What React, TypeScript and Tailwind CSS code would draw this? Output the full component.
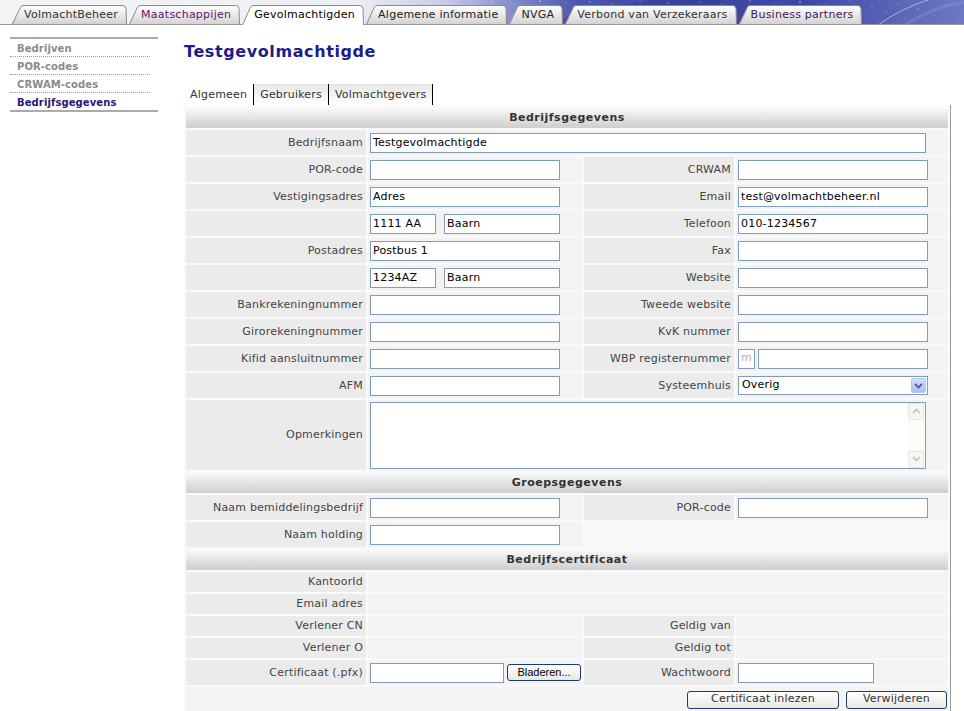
import React from "react";

const tabs: { label: string; text: string; active?: boolean }[] = [
  { label: "VolmachtBeheer", text: "text-[#333333]" },
  { label: "Maatschappijen", text: "text-[#5b1670]" },
  { label: "Gevolmachtigden", text: "text-black", active: true },
  { label: "Algemene informatie", text: "text-[#222222]" },
  { label: "NVGA", text: "text-[#222222]" },
  { label: "Verbond van Verzekeraars", text: "text-[#333333]" },
  { label: "Business partners", text: "text-[#3b1a4d]" },
];

const dots: [number, number, number, number][] = [
  [470, 3, 0.6, 0.5], [492, 2, 0.7, 0.6], [515, 4, 0.6, 0.6], [540, 1, 0.8, 0.7], [566, 3, 0.6, 0.5],
  [590, 2, 0.7, 0.6], [612, 4, 0.5, 0.5], [640, 1, 0.6, 0.6], [668, 3, 0.7, 0.5], [700, 2, 0.6, 0.6],
  [722, 4, 0.5, 0.5], [750, 1, 0.7, 0.6], [776, 3, 0.6, 0.5], [800, 2, 0.8, 0.7], [826, 4, 0.6, 0.5],
  [850, 1, 0.6, 0.6], [872, 6, 0.7, 0.6], [886, 12, 0.6, 0.5], [898, 4, 0.5, 0.6], [905, 18, 0.6, 0.4],
  [918, 9, 0.7, 0.5], [934, 15, 0.5, 0.4], [945, 5, 0.6, 0.5], [957, 20, 0.5, 0.4], [878, 20, 0.6, 0.4],
  [430, 2, 0.5, 0.35], [452, 4, 0.5, 0.4],
];

function TopTab({ label, text, active }: { label: string; text: string; active?: boolean }) {
  const h = active ? 20 : 19;
  const fill = active ? "#ffffff" : "url(#tabg)";
  return (
    <div className={`mr-[2px] flex shrink-0 ${active ? "relative z-10 -mb-px h-[20px]" : "h-[19px]"}`}>
      <svg width="11" height={h} className="block shrink-0">
        <path d={`M0,${h} L8,2.6 Q9,0.5 11,0.5 L11,${h} Z`} fill={fill} />
        <path d={`M0.5,${h} L8.3,2.6 Q9.2,0.5 11,0.5`} fill="none" stroke="#8a8a8a" />
      </svg>
      <div
        className={`flex h-full items-center whitespace-nowrap border-t border-[#8a8a8a] pl-[1px] pr-[3px] text-[11px] tracking-[0.25px] ${
          active ? "bg-white" : "bg-linear-to-b from-white to-[#d3d3d3]"
        } ${text}`}
      >
        {label}
      </div>
      <svg width="6" height={h} className="block shrink-0">
        <path d={`M0,0.5 L1.5,0.5 Q4.6,0.5 5,3.5 L5.6,${h} L0,${h} Z`} fill={fill} />
        <path d={`M0,0.5 L1.5,0.5 Q4.6,0.5 5,3.5 L5.5,${h}`} fill="none" stroke="#8a8a8a" />
      </svg>
    </div>
  );
}

const LBL = "flex items-center justify-end whitespace-nowrap bg-[#ebebeb] pr-[3px] pt-px text-[#444444]";
const VAL = "flex items-center bg-[#f3f3f3] pl-[2px]";
const INP = "block h-[20px] border border-[#7f9db9] bg-white px-[2px] text-[11px] text-black outline-none";
const HDR =
  "col-span-4 flex h-[21px] items-center justify-center bg-linear-to-b from-[#fbfbfb] to-[#cecece] pt-px font-bold tracking-[0.5px] text-[#333333]";
const BTN =
  "flex items-center justify-center rounded-[3px] border border-[#1c3c6c] bg-linear-to-b from-white to-[#e9e8e1] text-[#333333]";

function Row({
  l1,
  v1,
  l2,
  v2,
  h = "h-[25px]",
}: {
  l1?: string;
  v1?: React.ReactNode;
  l2?: string;
  v2?: React.ReactNode;
  h?: string;
}) {
  return (
    <>
      <div className={`${LBL} ${h}`}>{l1}</div>
      <div className={`${VAL} ${h}`}>{v1}</div>
      <div className={`${LBL} ${h}`}>{l2}</div>
      <div className={`${VAL} ${h}`}>{v2}</div>
    </>
  );
}

function Inp({ value = "", w = "w-[190px]" }: { value?: string; w?: string }) {
  return <input readOnly value={value} className={`${INP} ${w}`} />;
}

function Chevron({ up, color }: { up?: boolean; color: string }) {
  return (
    <svg width="9" height="6" viewBox="0 0 9 6">
      <path
        d={up ? "M1,5 L4.5,1.5 L8,5" : "M1,1 L4.5,4.5 L8,1"}
        fill="none"
        stroke={color}
        strokeWidth="1.8"
      />
    </svg>
  );
}

export default function App() {
  return (
    <div className="min-h-[711px] w-[964px] bg-white font-['DejaVu_Sans',Verdana,sans-serif] text-[11px] tracking-[0.2px]">
      <svg width="0" height="0" className="absolute">
        <defs>
          <linearGradient id="tabg" x1="0" y1="0" x2="0" y2="1">
            <stop offset="0" stopColor="#ffffff" />
            <stop offset="1" stopColor="#d3d3d3" />
          </linearGradient>
        </defs>
      </svg>

      {/* top banner with tabs */}
      <div className="relative h-[25px] border-b border-[#9a9a9a] bg-[linear-gradient(90deg,#f3f3f3_0%,#eff0f5_36%,#c9cce8_46%,#8f96d0_52%,#4b56ad_60%,#3a45a2_72%,#3f4aa6_84%,#5663b4_92%,#6d79c4_100%)]">
        <svg className="pointer-events-none absolute inset-0" width="964" height="24">
          <path d="M560,24 Q620,4 720,0" fill="none" stroke="#2f3994" strokeWidth="10" opacity="0.35" />
          <path d="M878,25 Q900,9 928,0" fill="none" stroke="#b8c0ec" strokeWidth="1" opacity="0.8" />
          <path d="M905,25 Q935,6 964,2" fill="none" stroke="#8d98d8" strokeWidth="3" opacity="0.35" />
          {dots.map(([x, y, r, o], i) => (
            <circle key={i} cx={x} cy={y} r={r} fill="#ffffff" opacity={o} />
          ))}
        </svg>
        <div className="relative flex h-full items-end pl-[12px]">
          {tabs.map((t) => (
            <TopTab key={t.label} {...t} />
          ))}
        </div>
      </div>

      <div className="flex">
        {/* left navigation */}
        <nav className="ml-[10px] mt-[12px] w-[148px] self-start border-y-2 border-[#ababab] text-[10px] font-bold tracking-[0.1px]">
          <div className="mr-[8px] flex h-[18px] items-center border-b border-dotted border-[#9a9a9a] pl-[7px] pt-px text-[#8a8a8a]">
            Bedrijven
          </div>
          <div className="mr-[8px] flex h-[18px] items-center border-b border-dotted border-[#9a9a9a] pl-[7px] pt-px text-[#8a8a8a]">
            POR-codes
          </div>
          <div className="mr-[8px] flex h-[18px] items-center border-b border-dotted border-[#9a9a9a] pl-[7px] pt-px text-[#8a8a8a]">
            CRWAM-codes
          </div>
          <div className="mr-[8px] flex h-[17px] items-center pl-[7px] pt-px text-[#1f1878]">Bedrijfsgegevens</div>
        </nav>

        {/* main */}
        <main className="ml-[26px]">
          <h1 className="mt-[17px] text-[16px] font-bold leading-[20px] tracking-[0.6px] text-[#1c1c8c]">
            Testgevolmachtigde
          </h1>

          <div className="mt-[22px] flex h-[21px] text-[#333333]">
            <div className="flex items-center border-r border-black bg-white px-[6px] pt-px">Algemeen</div>
            <div className="flex items-center border-r border-black bg-linear-to-b from-[#e6e6e6] to-white px-[6px] pt-px">
              Gebruikers
            </div>
            <div className="flex items-center border-r border-black bg-linear-to-b from-[#e6e6e6] to-white px-[6px] pt-px">
              Volmachtgevers
            </div>
          </div>

          <div className="grid w-[767px] grid-cols-[180px_214px_150px_212px] gap-[2px] border-r border-[#999999] bg-[#f9f9f9] p-[2px]">
            <div className={HDR}>Bedrijfsgegevens</div>

            <div className={`${LBL} h-[25px]`}>Bedrijfsnaam</div>
            <div className={`${VAL} col-span-3 h-[25px]`}>
              <Inp value="Testgevolmachtigde" w="w-[556px]" />
            </div>

            <Row l1="POR-code" v1={<Inp />} l2="CRWAM" v2={<Inp />} />
            <Row
              l1="Vestigingsadres"
              v1={<Inp value="Adres" />}
              l2="Email"
              v2={<Inp value="test@volmachtbeheer.nl" />}
            />
            <Row
              v1={
                <div className="flex gap-[8px]">
                  <Inp value="1111 AA" w="w-[66px]" />
                  <Inp value="Baarn" w="w-[116px]" />
                </div>
              }
              l2="Telefoon"
              v2={<Inp value="010-1234567" />}
            />
            <Row l1="Postadres" v1={<Inp value="Postbus 1" />} l2="Fax" v2={<Inp />} />
            <Row
              v1={
                <div className="flex gap-[8px]">
                  <Inp value="1234AZ" w="w-[66px]" />
                  <Inp value="Baarn" w="w-[116px]" />
                </div>
              }
              l2="Website"
              v2={<Inp />}
            />
            <Row l1="Bankrekeningnummer" v1={<Inp />} l2="Tweede website" v2={<Inp />} />
            <Row l1="Girorekeningnummer" v1={<Inp />} l2="KvK nummer" v2={<Inp />} />
            <Row
              l1="Kifid aansluitnummer"
              v1={<Inp />}
              l2="WBP registernummer"
              v2={
                <div className="flex gap-[3px]">
                  <div className="flex h-[20px] w-[17px] items-center justify-center border border-[#7f9db9] bg-white text-[#c9a3a8]">
                    m
                  </div>
                  <Inp w="w-[170px]" />
                </div>
              }
            />
            <Row
              l1="AFM"
              v1={<Inp />}
              l2="Systeemhuis"
              v2={
                <div className="flex h-[19px] w-[190px] items-center border border-[#7f9db9] bg-white">
                  <span className="flex-1 pl-[3px] text-black">Overig</span>
                  <div className="mr-[1px] flex h-[15px] w-[15px] items-center justify-center rounded-[2px] border border-[#b3c6f2] bg-linear-to-b from-[#cfdcfd] to-[#a9c0f3]">
                    <Chevron color="#4d6185" />
                  </div>
                </div>
              }
            />

            <div className={`${LBL} h-[70px]`}>Opmerkingen</div>
            <div className={`${VAL} col-span-3 h-[70px]`}>
              <div className="flex h-[67px] w-[556px] border border-[#7f9db9] bg-white">
                <div className="flex-1" />
                <div className="flex w-[17px] flex-col justify-between bg-[#fbfbf8]">
                  <div className="flex h-[17px] w-[16px] items-center justify-center rounded-[2px] border border-[#e6e5de] bg-[#f6f6f2]">
                    <Chevron up color="#c9c9c2" />
                  </div>
                  <div className="flex h-[17px] w-[16px] items-center justify-center rounded-[2px] border border-[#e6e5de] bg-[#f6f6f2]">
                    <Chevron color="#c9c9c2" />
                  </div>
                </div>
              </div>
            </div>

            <div className={HDR}>Groepsgegevens</div>
            <Row l1="Naam bemiddelingsbedrijf" v1={<Inp />} l2="POR-code" v2={<Inp />} />
            <div className={`${LBL} h-[25px]`}>Naam holding</div>
            <div className={`${VAL} h-[25px]`}>
              <Inp />
            </div>
            <div className="col-span-2 h-[25px]" />

            <div className={HDR}>Bedrijfscertificaat</div>
            <div className={`${LBL} h-[20px]`}>KantoorId</div>
            <div className={`${VAL} col-span-3 h-[20px]`} />
            <div className={`${LBL} h-[20px]`}>Email adres</div>
            <div className={`${VAL} col-span-3 h-[20px]`} />
            <Row l1="Verlener CN" l2="Geldig van" h="h-[20px]" />
            <Row l1="Verlener O" l2="Geldig tot" h="h-[20px]" />
            <Row
              l1="Certificaat (.pfx)"
              v1={
                <div className="flex items-center gap-[3px]">
                  <input readOnly value="" className={`${INP} h-[18px] w-[134px]`} />
                  <div
                    className={`${BTN} h-[17px] w-[74px] font-['Liberation_Sans',Arial,sans-serif] tracking-normal text-black`}
                  >
                    Bladeren...
                  </div>
                </div>
              }
              l2="Wachtwoord"
              v2={<Inp w="w-[136px]" />}
            />
            <div className="col-span-4 flex h-[25px] items-center justify-end gap-[7px] bg-[#f4f4f4] pr-[1px]">
              <div className={`${BTN} h-[18px] w-[152px]`}>Certificaat inlezen</div>
              <div className={`${BTN} h-[18px] w-[101px]`}>Verwijderen</div>
            </div>
          </div>
        </main>
      </div>
    </div>
  );
}
